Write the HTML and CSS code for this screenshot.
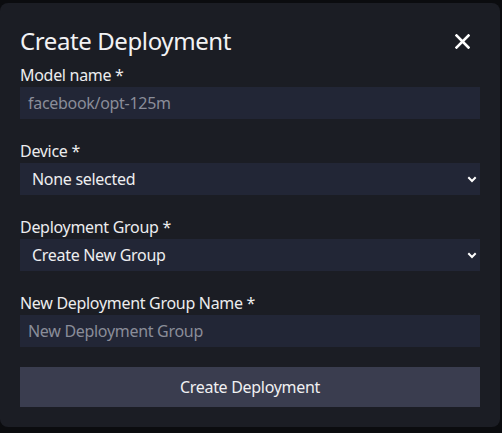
FILE: index.html
```html
<!DOCTYPE html>
<html lang="en">
<head>
    <meta charset="UTF-8">
    <meta name="viewport" content="width=device-width, initial-scale=1.0">
    <title>Create Deployment</title>
    <link rel="stylesheet" href="styles.css">
</head>

<body>
    <div class="modal">
        <div class="modal-header">
            <h2 class="modal-title">Create Deployment</h2>
            <button type="button" class="close-btn" aria-label="Close">
                <svg width="15" height="15" viewBox="0 0 15 15">
                    <path d="M1.5 1.5 L13.5 13.5 M13.5 1.5 L1.5 13.5" stroke="#fff" stroke-width="2.6" stroke-linecap="square"/>
                </svg>
            </button>
        </div>

        <form class="modal-form">
            <div class="form-group">
                <label for="model">Model name *</label>
                <input type="text" id="model" placeholder="facebook/opt-125m">
            </div>

            <div class="form-group">
                <label for="device">Device *</label>
                <div class="select-wrap">
                    <select id="device">
                        <option>None selected</option>
                    </select>
                    <svg class="chevron" width="10" height="7" viewBox="0 0 10 7">
                        <path d="M1.3 1.3 L5 5 L8.7 1.3" fill="none" stroke="#fff" stroke-width="2"/>
                    </svg>
                </div>
            </div>

            <div class="form-group">
                <label for="group">Deployment Group *</label>
                <div class="select-wrap">
                    <select id="group">
                        <option>Create New Group</option>
                    </select>
                    <svg class="chevron" width="10" height="7" viewBox="0 0 10 7">
                        <path d="M1.3 1.3 L5 5 L8.7 1.3" fill="none" stroke="#fff" stroke-width="2"/>
                    </svg>
                </div>
            </div>

            <div class="form-group">
                <label for="group-name">New Deployment Group Name *</label>
                <input type="text" id="group-name" placeholder="New Deployment Group">
            </div>

            <button type="button" class="submit-btn">Create Deployment</button>
        </form>
    </div>
</body>
</html>
```

FILE: styles.css
```css
body {
    margin: 0;
    background-color: #0b0c0f;
    font-family: "Noto Sans", "Open Sans", sans-serif;
    letter-spacing: -0.3px;
    color: #e8e8ea;
}

.modal {
    width: 460px;
    margin-top: 3px;
    padding: 20px;
    background-color: #1b1d24;
    border-radius: 8px;
}

.modal-header {
    display: flex;
    align-items: center;
    justify-content: space-between;
    height: 40px;
    margin-top: -2px;
    margin-bottom: 2px;
}

.modal-title {
    margin: 0;
    font-size: 24px;
    font-weight: 400;
    line-height: 32px;
    letter-spacing: -0.4px;
    color: #f2f2f4;
}

.close-btn {
    display: flex;
    padding: 0;
    margin-right: 10px;
    background: none;
    border: none;
    cursor: pointer;
}

.modal-form {
    display: flex;
    flex-direction: column;
    gap: 20px;
}

.form-group {
    display: flex;
    flex-direction: column;
}

label {
    font-size: 16px;
    line-height: 24px;
    color: #ececee;
}

input,
select {
    box-sizing: border-box;
    width: 100%;
    height: 32px;
    margin: 0;
    border: none;
    outline: none;
    background-color: #222636;
    font-family: inherit;
    font-size: 16px;
    letter-spacing: inherit;
    color: #eeeef0;
}

input {
    padding: 0 8px;
}

input::placeholder {
    color: #8a8d99;
}

.select-wrap {
    position: relative;
}

select {
    appearance: none;
    padding: 0 12px;
}

.chevron {
    position: absolute;
    right: 3px;
    top: 13px;
    pointer-events: none;
}

.submit-btn {
    height: 40px;
    border: none;
    background-color: #3a3d4f;
    font-family: inherit;
    font-size: 16px;
    letter-spacing: inherit;
    color: #f0f0f2;
    cursor: pointer;
}
```
